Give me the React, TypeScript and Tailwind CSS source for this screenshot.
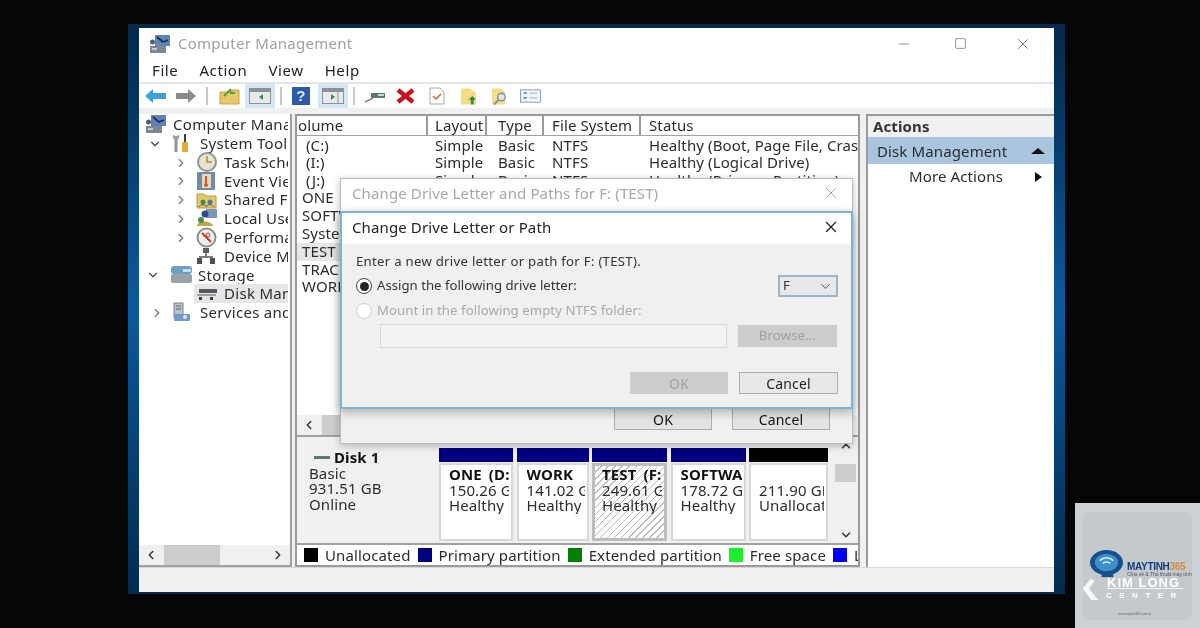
import React from 'react'
import { ChevronDown, ChevronRight, ChevronLeft, ChevronUp, X, Minus, Square } from 'lucide-react'

const treeRows = [
  { label: 'Computer Management', indent: 6, arrow: '', icon: 'computer' },
  { label: 'System Tools', indent: 33, arrow: 'down', icon: 'tools' },
  { label: 'Task Scheduler', indent: 57, arrow: 'right', icon: 'clock' },
  { label: 'Event Viewer', indent: 57, arrow: 'right', icon: 'event' },
  { label: 'Shared Folders', indent: 57, arrow: 'right', icon: 'shared' },
  { label: 'Local Users', indent: 57, arrow: 'right', icon: 'users' },
  { label: 'Performance', indent: 57, arrow: 'right', icon: 'perf' },
  { label: 'Device Manager', indent: 57, arrow: '', icon: 'device' },
  { label: 'Storage', indent: 31, arrow: 'down', icon: 'storage' },
  { label: 'Disk Management', indent: 57, arrow: '', icon: 'disk', selected: true },
  { label: 'Services and Applications', indent: 33, arrow: 'right', icon: 'services' },
]

// only the first rows show their columns, the rest sit behind the dialogs
const openVolumes = [
  { name: '(C:)', status: 'Healthy (Boot, Page File, Crash Dump)' },
  { name: '(I:)', status: 'Healthy (Logical Drive)' },
  { name: '(J:)', status: 'Healthy (Primary Partition)' },
]
const coveredVolumes = ['ONE', 'SOFTWARE', 'System', 'TEST', 'TRACK', 'WORK']

const partitions = [
  { w: 'w-[74px]', bar: 'bg-[#000080]', title: 'ONE (D:)', size: '150.26 GB', state: 'Healthy' },
  { w: 'w-[72px]', bar: 'bg-[#000080]', title: 'WORK', size: '141.02 GB', state: 'Healthy' },
  { w: 'w-[75px]', bar: 'bg-[#000080]', title: 'TEST (F:)', size: '249.61 GB', state: 'Healthy', active: true },
  { w: 'w-[75px]', bar: 'bg-[#000080]', title: 'SOFTWARE', size: '178.72 GB', state: 'Healthy' },
  { w: 'w-[79px]', bar: 'bg-black', title: '', size: '211.90 GB', state: 'Unallocated' },
]

const legend = [
  { color: 'bg-black', label: 'Unallocated' },
  { color: 'bg-[#000080]', label: 'Primary partition' },
  { color: 'bg-[#008000]', label: 'Extended partition' },
  { color: 'bg-[#1cf02c]', label: 'Free space' },
  { color: 'bg-[#0000f0]', label: 'Logical drive' },
]

function TreeIcon({ name }: { name: string }) {
  switch (name) {
    case 'computer':
      return (
        <svg width="21" height="18" viewBox="0 0 21 18">
          <rect x="6" y="0" width="15" height="11" fill="#5f84b4" />
          <path d="M8 2l6 5 5-2" stroke="#17315f" strokeWidth="1.8" fill="none" />
          <rect x="1" y="11" width="16" height="7" fill="#7b8892" />
          <rect x="3" y="13" width="5" height="2" fill="#c4ccd2" />
          <circle cx="3.5" cy="7" r="2.5" fill="#4a6278" />
        </svg>
      )
    case 'tools':
      return (
        <svg width="18" height="20" viewBox="0 0 18 20">
          <path d="M4 6v13" stroke="#8a949c" strokeWidth="3" />
          <path d="M1 1v4c0 2 6 2 6 0V1L5.5 3h-3z" fill="#9aa4ab" />
          <rect x="10" y="9" width="6" height="10" rx="1" fill="#e3b02c" />
          <rect x="12" y="1" width="2" height="8" fill="#3b3f45" />
        </svg>
      )
    case 'clock':
      return (
        <svg width="22" height="20" viewBox="0 0 22 20">
          <circle cx="11" cy="10" r="9" fill="#e9e2d2" stroke="#8f959b" strokeWidth="2" />
          <path d="M11 4v6h5" stroke="#b98a3c" strokeWidth="1.6" fill="none" />
        </svg>
      )
    case 'event':
      return (
        <svg width="20" height="20" viewBox="0 0 20 20">
          <rect x="1" y="1" width="18" height="18" fill="#6d8bb0" />
          <rect x="6" y="3" width="9" height="14" fill="#e8d8b8" />
          <path d="M10 5v7" stroke="#c65a2c" strokeWidth="2" />
          <circle cx="10" cy="14" r="2" fill="#c65a2c" />
        </svg>
      )
    case 'shared':
      return (
        <svg width="21" height="18" viewBox="0 0 21 18">
          <path d="M1 3h7l2 2h10v12H1z" fill="#e8c766" stroke="#b49a4a" />
          <circle cx="7" cy="11" r="2.5" fill="#3f8a57" />
          <circle cx="14" cy="11" r="2.5" fill="#4b78b0" />
          <path d="M3 16c1-3 7-3 8 0M10 16c1-3 7-3 8 0" stroke="#40606e" fill="none" />
        </svg>
      )
    case 'users':
      return (
        <svg width="22" height="20" viewBox="0 0 22 20">
          <rect x="10" y="1" width="11" height="9" fill="#7b96bd" />
          <circle cx="9" cy="6" r="3.5" fill="#2d4f86" />
          <path d="M1 18c0-6 15-6 16 0z" fill="#c0a544" />
          <circle cx="5" cy="12" r="3" fill="#4f8a4f" />
        </svg>
      )
    case 'perf':
      return (
        <svg width="21" height="21" viewBox="0 0 21 21">
          <circle cx="10.5" cy="10.5" r="9" fill="#f1efec" stroke="#8b8f94" strokeWidth="2" />
          <path d="M6 6l9 9" stroke="#c0392b" strokeWidth="2" />
          <circle cx="12" cy="8" r="2" fill="none" stroke="#c0392b" />
        </svg>
      )
    case 'device':
      return (
        <svg width="20" height="18" viewBox="0 0 20 18">
          <rect x="7" y="1" width="6" height="5" fill="#5b6067" />
          <path d="M10 6v4M3 10h14" stroke="#55585c" strokeWidth="1.5" />
          <rect x="1" y="11" width="5" height="6" fill="#4c4f54" />
          <rect x="14" y="11" width="5" height="6" fill="#4c4f54" />
        </svg>
      )
    case 'storage':
      return (
        <svg width="24" height="19" viewBox="0 0 24 19">
          <rect x="1" y="9" width="21" height="9" rx="2" fill="#98a3a8" />
          <rect x="1" y="1" width="21" height="8" rx="3" fill="#6f9dc4" />
          <rect x="13" y="4" width="8" height="3" fill="#c4e0ef" />
        </svg>
      )
    case 'disk':
      return (
        <svg width="22" height="14" viewBox="0 0 22 14">
          <rect x="3" y="2" width="18" height="4" fill="#55585c" />
          <rect x="1" y="7" width="19" height="2" fill="#9a9da0" />
          <rect x="3" y="10" width="3" height="3" fill="#3c3e40" />
          <rect x="14" y="10" width="3" height="3" fill="#3c3e40" />
        </svg>
      )
    default:
      return (
        <svg width="20" height="20" viewBox="0 0 20 20">
          <rect x="2" y="1" width="9" height="14" fill="#b6c1cc" stroke="#77828c" />
          <path d="M4 4h5M4 7h5" stroke="#5a6670" />
          <rect x="2" y="12" width="16" height="7" rx="1" fill="#6e9cc6" />
          <circle cx="13" cy="15" r="2" fill="#dbe8f1" />
        </svg>
      )
  }
}

function ToolbarIcons() {
  return (
    <div className="flex h-full items-center pl-[5px]">
      <svg width="23" height="16" viewBox="0 0 23 16">
        <path d="M9 1L1 8l8 7v-4h13V5H9z" fill="#3ba3dc" />
      </svg>
      <svg className="ml-[8px]" width="22" height="16" viewBox="0 0 22 16">
        <path d="M13 1l8 7-8 7v-4H1V5h12z" fill="#8c8c8c" />
      </svg>
      <div className="ml-[9px] h-[18px] w-[2px] bg-[#c8c8c8]" />
      <svg className="ml-[11px]" width="21" height="18" viewBox="0 0 21 18">
        <path d="M1 5h7l2-2h10v14H1z" fill="#e9c86a" stroke="#c4a24a" />
        <path d="M5 9l6-6 1 3 4 0" stroke="#5a9a3a" strokeWidth="2" fill="none" />
      </svg>
      <div className="ml-[5px] flex h-[24px] w-[30px] items-center justify-center bg-[#d3e7f5]">
        <svg width="22" height="16" viewBox="0 0 22 16">
          <rect x="0.5" y="0.5" width="21" height="15" fill="#e8eaec" stroke="#8d9296" />
          <rect x="1" y="1" width="20" height="3" fill="#8a9298" />
          <path d="M14 6v6l-4-3z" fill="#3a8c4a" />
        </svg>
      </div>
      <div className="ml-[5px] h-[18px] w-[2px] bg-[#c8c8c8]" />
      <div className="ml-[10px] flex h-[18px] w-[18px] items-center justify-center bg-[#2b5aa6] font-['Liberation_Sans',sans-serif] text-[15px] font-bold text-[#dfe9f7]">
        ?
      </div>
      <div className="ml-[8px] flex h-[24px] w-[30px] items-center justify-center bg-[#d3e7f5]">
        <svg width="22" height="16" viewBox="0 0 22 16">
          <rect x="0.5" y="0.5" width="21" height="15" fill="#e8eaec" stroke="#8d9296" />
          <rect x="1" y="1" width="20" height="3" fill="#8a9298" />
          <path d="M9 6v6l4-3z" fill="#3a8c4a" />
          <path d="M16 4v11" stroke="#8d9296" />
        </svg>
      </div>
      <div className="ml-[5px] h-[18px] w-[2px] bg-[#c8c8c8]" />
      <svg className="ml-[9px]" width="22" height="14" viewBox="0 0 22 14">
        <rect x="7" y="4" width="14" height="5" fill="#5b7a6a" />
        <rect x="14" y="5" width="6" height="2" fill="#c6dccc" />
        <path d="M9 9l-8 4" stroke="#8a8a8a" strokeWidth="1.5" />
      </svg>
      <svg className="ml-[10px]" width="19" height="16" viewBox="0 0 19 16">
        <path d="M2 2l15 12M17 2L2 14" stroke="#c8141c" strokeWidth="4.5" />
      </svg>
      <svg className="ml-[14px]" width="16" height="18" viewBox="0 0 16 18">
        <path d="M1 1h10l4 4v12H1z" fill="#fdfdfd" stroke="#a8a8a8" />
        <path d="M4 9l3 3 5-5" stroke="#d0603a" strokeWidth="1.5" fill="none" />
      </svg>
      <svg className="ml-[15px]" width="17" height="19" viewBox="0 0 18 19">
        <path d="M1 1h10l6 5v12H1z" fill="#f6dc82" />
        <path d="M13 9l4 4h-2.5v5h-3v-5H9z" fill="#2f8c3c" />
      </svg>
      <svg className="ml-[14px]" width="18" height="19" viewBox="0 0 19 19">
        <path d="M1 1h10l4 4v13H1z" fill="#f4dc8c" />
        <circle cx="11" cy="10" r="4" fill="#d8e8ee" stroke="#8a8f94" strokeWidth="1.5" />
        <path d="M8 13l-5 5" stroke="#8a8f94" strokeWidth="2" />
      </svg>
      <svg className="ml-[11px]" width="21" height="14" viewBox="0 0 22 14">
        <rect x="0.5" y="0.5" width="21" height="13" fill="#f2f5f8" stroke="#8aa0b4" />
        <path d="M4 4h3M4 9h3" stroke="#4c86b8" strokeWidth="2" />
        <path d="M10 4h8M10 9h8" stroke="#a8b0b8" />
      </svg>
    </div>
  )
}

function Tree() {
  return (
    <div className="mr-[2px] flex min-h-0 flex-1 flex-col overflow-hidden pt-[1px] tracking-[0.3px]">
      {treeRows.map((row) => (
        <div
          key={row.label}
          className="relative flex h-[18.8px] shrink-0 items-center whitespace-nowrap"
          style={{ paddingLeft: row.selected ? row.indent - 2 : row.indent }}
        >
          {row.arrow && (
            <span className="absolute top-[3px]" style={{ left: row.indent - (row.arrow === 'down' ? 24 : 22) }}>
              {row.arrow === 'down' ? (
                <ChevronDown size={14} strokeWidth={2} className="text-[#444]" />
              ) : (
                <ChevronRight size={14} strokeWidth={2} className="text-[#777]" />
              )}
            </span>
          )}
          <span className={row.selected ? 'flex h-full flex-1 items-center bg-[#e6e6e6] pl-[2px]' : 'flex items-center'}>
            <span className="flex w-[28px] shrink-0 items-center">
              <TreeIcon name={row.icon} />
            </span>
            <span>{row.label}</span>
          </span>
        </div>
      ))}
    </div>
  )
}

function HScroll({ thumb, thumbLeft }: { thumb: string; thumbLeft: string }) {
  return (
    <div className="flex h-[20px] shrink-0 items-center bg-[#f0f0f0] text-[#333]">
      <ChevronLeft size={14} strokeWidth={2.5} className="ml-[5px] shrink-0" />
      <div className={`h-full bg-[#cdcdcd] ${thumb} ${thumbLeft}`} />
      <div className="flex-1" />
      <ChevronRight size={14} strokeWidth={2.5} className="mr-[5px] shrink-0" />
    </div>
  )
}

function VolumeList() {
  return (
    <div className="flex min-h-0 flex-1 flex-col overflow-hidden">
      <div className="flex h-[20px] shrink-0 items-center border-b border-[#a0a0a0] leading-none">
        <div className="flex h-full w-[131px] shrink-0 items-center border-r-2 border-[#9a9a9a] pl-[1px]">olume</div>
        <div className="flex h-full w-[59px] shrink-0 items-center border-r-2 border-[#9a9a9a] pl-[7px]">Layout</div>
        <div className="flex h-full w-[57px] shrink-0 items-center border-r-2 border-[#9a9a9a] pl-[11px]">Type</div>
        <div className="flex h-full w-[97px] shrink-0 items-center border-r-2 border-[#9a9a9a] pl-[8px] whitespace-nowrap">File System</div>
        <div className="pl-[8px]">Status</div>
      </div>
      <div className="min-h-0 flex-1 overflow-hidden pt-[0px]">
        {openVolumes.map((v) => (
          <div key={v.name} className="flex h-[17.8px] items-center whitespace-nowrap">
            <div className="w-[131px] shrink-0 pl-[9px]">{v.name}</div>
            <div className="w-[59px] shrink-0 pl-[7px]">Simple</div>
            <div className="w-[57px] shrink-0 pl-[11px]">Basic</div>
            <div className="w-[97px] shrink-0 pl-[8px]">NTFS</div>
            <div className="pl-[8px]">{v.status}</div>
          </div>
        ))}
        {coveredVolumes.map((name) => (
          <div key={name} className={`h-[17.8px] w-[43px] overflow-hidden whitespace-nowrap pl-[5px] leading-[17.8px] ${name === 'TEST' ? 'bg-[#e6e6e6]' : ''}`}>
            {name}
          </div>
        ))}
      </div>
      <HScroll thumb="w-[26px]" thumbLeft="ml-[6px]" />
    </div>
  )
}

function DiskMap() {
  return (
    <div className="flex h-[110px] shrink-0 border-y-2 border-[#a0a0a0] bg-[#f0f0f0]">
      <div className="flex w-[142px] shrink-0 flex-col pl-[12px] pt-[13px] leading-[15.5px]">
        <div className="flex items-center font-bold text-[#111]">
          <span className="ml-[5px] mr-[4px] inline-block h-[3px] w-[16px] bg-[#5d7a68]" />
          Disk 1
        </div>
        <div>Basic</div>
        <div>931.51 GB</div>
        <div>Online</div>
      </div>
      <div className="flex shrink-0 gap-[3.5px] pt-[11px]">
        {partitions.map((p) => (
          <div key={p.size} className={`flex h-[93px] flex-col ${p.w}`}>
            <div className={`h-[14px] shrink-0 ${p.bar}`} />
            <div
              className={
                p.active
                  ? 'mt-[1px] flex-1 border-[3px] border-[#bdbdbd] bg-[repeating-linear-gradient(135deg,#fff_0,#fff_4px,#bbb_4px,#bbb_5px)] pl-[7px] pt-[1px] leading-[15.5px]'
                  : 'mt-[1px] flex-1 border-2 border-[#d8d8d8] bg-white pl-[8px] pt-[2px] leading-[15.5px]'
              }
            >
              <div className="mr-[2px] overflow-hidden whitespace-nowrap">
                <div className="h-[15.5px] font-bold text-[#111] [word-spacing:3px]">{p.title}</div>
                <div>{p.size}</div>
                <div>{p.state}</div>
              </div>
            </div>
          </div>
        ))}
      </div>
      <div className="ml-[7px] flex flex-1 flex-col items-center pr-[2px] text-[#333]">
        <ChevronUp size={14} strokeWidth={2.5} className="mt-[2px]" />
        <div className="mt-[11px] h-[18px] w-full bg-[#cdcdcd]" />
        <div className="flex-1" />
        <ChevronDown size={14} strokeWidth={2.5} className="mb-[1px]" />
      </div>
    </div>
  )
}

function LegendBar() {
  return (
    <div className="flex h-[20px] shrink-0 items-center overflow-hidden whitespace-nowrap pl-[7px]">
      {legend.map((l) => (
        <div key={l.label} className="mr-[7px] flex items-center">
          <span className={`mr-[7px] h-[14px] w-[14px] shrink-0 ${l.color}`} />
          {l.label}
        </div>
      ))}
    </div>
  )
}

function Radio({ checked, disabled }: { checked?: boolean; disabled?: boolean }) {
  return (
    <span
      className={`flex h-[16px] w-[16px] shrink-0 items-center justify-center rounded-full border bg-white ${
        disabled ? 'border-[#d0d0d0]' : 'border-[#444]'
      }`}
    >
      {checked && <span className="h-[9px] w-[9px] rounded-full bg-[#222]" />}
    </span>
  )
}

function Dialogs() {
  return (
    <>
      <div className="absolute left-[340px] top-[178px] flex h-[266px] w-[513px] flex-col justify-between border border-[#bcbcbc] bg-[#f0f0f0] shadow-[0_2px_8px_rgba(0,0,0,0.25)]">
        <div className="flex h-[33px] items-center justify-between bg-white pb-[5px] pl-[11px] pr-[12px] text-[#a8a8a8]">
          <span>Change Drive Letter and Paths for F: (TEST)</span>
          <X size={18} strokeWidth={1.2} className="text-[#9a9a9a]" />
        </div>
        <div className="flex justify-end gap-[20px] pb-[13px] pr-[22px] text-[14px]">
          <div className="flex h-[22px] w-[98px] items-center justify-center border border-[#adadad] bg-[#e4e4e4] text-[#111]">OK</div>
          <div className="flex h-[22px] w-[98px] items-center justify-center border border-[#adadad] bg-[#e4e4e4] text-[#111]">Cancel</div>
        </div>
      </div>
      <div className="absolute left-[340px] top-[211px] flex h-[198px] w-[513px] flex-col border-2 border-[#7fb2d4] bg-[#f0f0f0] shadow-[0_3px_10px_rgba(0,0,0,0.3)]">
        <div className="flex h-[31px] shrink-0 items-center justify-between bg-white pb-[3px] pl-[10px] pr-[11px] text-[#222]">
          <span>Change Drive Letter or Path</span>
          <X size={18} strokeWidth={1.6} className="text-[#222]" />
        </div>
        <div className="flex flex-1 flex-col pl-[14px] pr-[13px] pt-[8px] text-[13.2px] text-[#333]">
          <div className="h-[18px] leading-[18px] tracking-[0.27px]">Enter a new drive letter or path for F: (TEST).</div>
          <div className="mt-[4px] flex h-[24px] items-center tracking-[0px]">
            <Radio checked />
            <span className="ml-[5px]">Assign the following drive letter:</span>
            <div className="ml-auto flex h-[22px] w-[60px] items-center justify-between border-2 border-[#9cb4c8] bg-[#e8e8e8] pl-[3px] pr-[3px]">
              F
              <ChevronDown size={15} strokeWidth={1.5} className="text-[#444]" />
            </div>
          </div>
          <div className="mt-[1px] flex h-[24px] items-center tracking-[0.07px] text-[#a8a8a8]">
            <Radio disabled />
            <span className="ml-[5px]">Mount in the following empty NTFS folder:</span>
          </div>
          <div className="mt-[1px] flex items-center pl-[24px]">
            <div className="h-[24px] w-[347px] border border-[#d8d8d8] bg-[#f2f2f2]" />
            <div className="ml-[11px] flex h-[22px] w-[99px] items-center justify-center bg-[#cdcdcd] text-[#a0a0a0]">Browse...</div>
          </div>
          <div className="mt-[24px] flex justify-end gap-[11px] text-[14px] text-[#222]">
            <div className="flex h-[22px] w-[98px] items-center justify-center bg-[#cdcdcd] text-[#a0a0a0]">OK</div>
            <div className="flex h-[22px] w-[99px] items-center justify-center border border-[#adadad] bg-[#e8e8e8]">Cancel</div>
          </div>
        </div>
      </div>
    </>
  )
}

function LogoCard() {
  return (
    <div className="absolute left-[1075px] top-[503px] flex h-[125px] w-[125px] items-start bg-[#ccd1d6] pl-[8px] pt-[9px] tracking-normal">
      <div className="relative h-[108px] w-[109px] rounded-[8px] bg-[#c4c9ce] font-['Liberation_Sans',sans-serif]">
        <svg className="absolute left-[5px] top-[36px]" width="37" height="33" viewBox="0 0 36 34">
          <ellipse cx="18" cy="15" rx="17" ry="13" fill="#14508c" />
          <ellipse cx="18" cy="15" rx="12" ry="9" fill="#3d8fcb" />
          <path d="M11 13c4-4 10-4 14 0M14 16c2-2 6-2 8 0" stroke="#dff0fa" strokeWidth="1.5" fill="none" />
          <rect x="13" y="27" width="12" height="3" fill="#14508c" />
        </svg>
        <div className="absolute left-[44px] top-[50px] text-[10px] font-bold leading-none tracking-[-0.3px] text-[#143c78]">
          MAYTINH<span className="text-[#d48a3a]">365</span>
        </div>
        <div className="absolute left-[44px] top-[60px] text-[5px] leading-none text-[#555]">Chia sẻ & Thủ thuật máy tính</div>
        <div className="absolute left-[24px] top-[64px] text-[13px] font-bold leading-none tracking-[1px] text-white">KIM LONG</div>
        <div className="absolute left-[24px] top-[76px] h-[1px] w-[76px] bg-[#f0f2f4]" />
        <div className="absolute left-[23px] top-[80px] text-[8px] font-bold leading-none tracking-[7.5px] text-white">CENTER</div>
        <svg className="absolute left-[-1px] top-[66px]" width="17" height="24" viewBox="0 0 24 32">
          <path d="M12 0L1 14l12 16h10L10 14 18 3z" fill="#f6f8f9" />
        </svg>
        <div className="absolute left-[35px] top-[101px] text-[3px] leading-none text-[#666]">www.maytinh365.com.vn</div>
      </div>
    </div>
  )
}

export default function App() {
  return (
    <div className="relative h-[628px] w-[1200px] overflow-hidden bg-[#060606] pl-[128px] pt-[24px] font-['Noto_Sans',sans-serif] text-[15px] tracking-[0.12px] text-[#2c2c2c] blur-[0.4px]">
      <div className="h-[570px] w-[937px] bg-gradient-to-b from-[#04284a] via-[#0b5a9e] to-[#032a4e] pb-[2px] pl-[11px] pr-[11px] pt-[4px]">
        <div className="flex h-full w-full flex-col bg-white">
          <div className="flex h-[31px] shrink-0 items-center pl-[10px] text-[#a0a0a0]">
            <TreeIcon name="computer" />
            <span className="ml-[8px] tracking-[0.25px]">Computer Management</span>
            <div className="ml-auto flex items-center text-[#777]">
              <Minus size={16} strokeWidth={1.2} />
              <Square size={13} strokeWidth={1.4} className="ml-[42px]" />
              <X size={18} strokeWidth={1.2} className="ml-[47px] mr-[22px]" />
            </div>
          </div>
          <div className="flex h-[25px] shrink-0 items-center gap-[21px] border-b-2 border-[#e4e4e4] pl-[13px] tracking-[0.6px] text-[#222]">
            <span>File</span>
            <span>Action</span>
            <span>View</span>
            <span>Help</span>
          </div>
          <div className="h-[24px] shrink-0">
            <ToolbarIcons />
          </div>
          <div className="flex min-h-0 flex-1 bg-[#f0f0f0] pt-[6px]">
            <div className="flex w-[153px] shrink-0 flex-col border-b-2 border-r-2 border-[#a0a0a0] bg-white">
              <Tree />
              <HScroll thumb="w-[56px]" thumbLeft="ml-[6px]" />
            </div>
            <div className="ml-[3px] flex w-[565px] shrink-0 flex-col border-x-2 border-b-2 border-t-2 border-[#9a9a9a] bg-white">
              <VolumeList />
              <DiskMap />
              <LegendBar />
            </div>
            <div className="ml-[6px] flex min-w-0 flex-1 flex-col border-l-2 border-t-2 border-[#9a9a9a] bg-white">
              <div className="flex h-[21px] shrink-0 items-center bg-[#f0f0f0] pl-[5px] font-bold text-[#333]">Actions</div>
              <div className="flex h-[27px] shrink-0 items-center justify-between bg-[#a9c6de] pl-[9px] pr-[9px] pt-[1px]">
                Disk Management
                <span className="h-0 w-0 border-x-[7px] border-b-[6px] border-x-transparent border-b-[#111]" />
              </div>
              <div className="flex h-[25px] shrink-0 items-center justify-between pl-[41px] pr-[12px]">
                More Actions
                <span className="h-0 w-0 border-y-[5px] border-l-[7px] border-y-transparent border-l-[#111]" />
              </div>
            </div>
          </div>
          <div className="h-[25px] shrink-0 border-t border-[#d8d8d8] bg-[#f0f0f0]" />
        </div>
      </div>
      <Dialogs />
      <LogoCard />
    </div>
  )
}
